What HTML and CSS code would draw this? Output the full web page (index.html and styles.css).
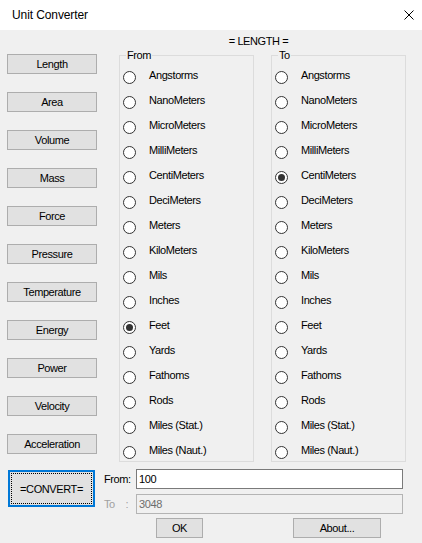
FILE: index.html
```html
<!DOCTYPE html>
<html>
<head>
<meta charset="utf-8">
<title>Unit Converter</title>
<link rel="stylesheet" href="styles.css">
</head>
<body>
<div class="window">
  <div class="titlebar">
    <span class="title">Unit Converter</span>
    <svg class="close" width="10" height="10" viewBox="0 0 10 10"><path d="M0.5 0.5L9.5 9.5M9.5 0.5L0.5 9.5" stroke="#000" stroke-width="1" fill="none"/></svg>
  </div>
  <div class="client">
    <div class="heading">= LENGTH =</div>
    <div class="top">
      <div class="units">
        <button class="btn unit">Length</button>
        <button class="btn unit">Area</button>
        <button class="btn unit">Volume</button>
        <button class="btn unit">Mass</button>
        <button class="btn unit">Force</button>
        <button class="btn unit">Pressure</button>
        <button class="btn unit">Temperature</button>
        <button class="btn unit">Energy</button>
        <button class="btn unit">Power</button>
        <button class="btn unit">Velocity</button>
        <button class="btn unit">Acceleration</button>
      </div>
      <div class="group from">
        <span class="legend">From</span>
        <div class="row"><span class="radio"></span><span>Angstorms</span></div>
        <div class="row"><span class="radio"></span><span>NanoMeters</span></div>
        <div class="row"><span class="radio"></span><span>MicroMeters</span></div>
        <div class="row"><span class="radio"></span><span>MilliMeters</span></div>
        <div class="row"><span class="radio"></span><span>CentiMeters</span></div>
        <div class="row"><span class="radio"></span><span>DeciMeters</span></div>
        <div class="row"><span class="radio"></span><span>Meters</span></div>
        <div class="row"><span class="radio"></span><span>KiloMeters</span></div>
        <div class="row"><span class="radio"></span><span>Mils</span></div>
        <div class="row"><span class="radio"></span><span>Inches</span></div>
        <div class="row"><span class="radio checked"></span><span>Feet</span></div>
        <div class="row"><span class="radio"></span><span>Yards</span></div>
        <div class="row"><span class="radio"></span><span>Fathoms</span></div>
        <div class="row"><span class="radio"></span><span>Rods</span></div>
        <div class="row"><span class="radio"></span><span>Miles (Stat.)</span></div>
        <div class="row"><span class="radio"></span><span>Miles (Naut.)</span></div>
      </div>
      <div class="group to">
        <span class="legend">To</span>
        <div class="row"><span class="radio"></span><span>Angstorms</span></div>
        <div class="row"><span class="radio"></span><span>NanoMeters</span></div>
        <div class="row"><span class="radio"></span><span>MicroMeters</span></div>
        <div class="row"><span class="radio"></span><span>MilliMeters</span></div>
        <div class="row"><span class="radio checked"></span><span>CentiMeters</span></div>
        <div class="row"><span class="radio"></span><span>DeciMeters</span></div>
        <div class="row"><span class="radio"></span><span>Meters</span></div>
        <div class="row"><span class="radio"></span><span>KiloMeters</span></div>
        <div class="row"><span class="radio"></span><span>Mils</span></div>
        <div class="row"><span class="radio"></span><span>Inches</span></div>
        <div class="row"><span class="radio"></span><span>Feet</span></div>
        <div class="row"><span class="radio"></span><span>Yards</span></div>
        <div class="row"><span class="radio"></span><span>Fathoms</span></div>
        <div class="row"><span class="radio"></span><span>Rods</span></div>
        <div class="row"><span class="radio"></span><span>Miles (Stat.)</span></div>
        <div class="row"><span class="radio"></span><span>Miles (Naut.)</span></div>
      </div>
    </div>
    <div class="bottom">
      <button class="btn convert">=CONVERT=</button>
      <div class="form">
        <div class="field">
          <span class="label">From:</span>
          <div class="input">100</div>
        </div>
        <div class="field">
          <span class="label disabled">To    :</span>
          <div class="input disabled">3048</div>
        </div>
        <div class="actions">
          <button class="btn ok">OK</button>
          <button class="btn about">About...</button>
        </div>
      </div>
    </div>
  </div>
</div>
</body>
</html>
```
FILE: styles.css
```css
* { box-sizing: border-box; }
html, body { margin: 0; padding: 0; }
body {
  background: #f0f0f0;
  font-family: "Liberation Sans", Arial, sans-serif;
  font-size: 11px;
  letter-spacing: -0.4px;
  color: #000;
}
.window { width: 422px; height: 543px; overflow: hidden; }
.titlebar {
  height: 30px;
  background: #fff;
  display: flex;
  align-items: center;
  justify-content: space-between;
  padding: 0 8px 0 12px;
}
.title { font-size: 12px; line-height: 30px; letter-spacing: -0.1px; }
.close { display: block; }
.client { padding: 5px 16px 0 7px; }
.heading {
  line-height: 13px;
  height: 13px;
  margin-left: 112px;
  width: 287px;
  padding-right: 8px;
  text-align: center;
}
.top { display: flex; margin-top: 6px; }
.units { display: flex; flex-direction: column; gap: 18px; width: 90px; }
.btn {
  font-family: inherit;
  font-size: 11px;
  letter-spacing: -0.4px;
  color: #000;
  background: #e1e1e1;
  border: 1px solid #adadad;
  padding: 0;
  margin: 0;
  height: 20px;
}
.unit { width: 90px; }
.group {
  position: relative;
  width: 135px;
  height: 407px;
  margin-top: 1px;
  border: 1px solid #dcdcdc;
  padding-top: 7px;
  display: grid;
  grid-auto-rows: 25px;
  align-content: start;
}
.from { margin-left: 22px; }
.to { margin-left: 17px; }
.legend {
  position: absolute;
  top: -7px;
  left: 6px;
  line-height: 13px;
  padding: 0 1px;
  background: #f0f0f0;
}
.row {
  display: flex;
  align-items: center;
  line-height: 25px;
  padding-left: 3px;
  gap: 13px;
}
.radio {
  position: relative;
  width: 13px;
  height: 13px;
  flex: none;
  border: 1px solid #333;
  border-radius: 50%;
  background: #fff;
  margin-top: 3px;
}
.radio.checked::after {
  content: "";
  position: absolute;
  left: 2px;
  top: 2px;
  width: 7px;
  height: 7px;
  border-radius: 50%;
  background: #333;
}
.bottom { display: flex; margin-top: 7px; }
.convert {
  width: 87px;
  height: 37px;
  margin: 1px 0 0 1px;
  border: 2px solid #0078d7;
  outline: 1px dotted #000;
  outline-offset: -4px;
}
.form { margin-left: 9px; display: flex; flex-direction: column; gap: 5px; }
.field { display: flex; align-items: center; }
.label { width: 32px; white-space: pre; }
.label.disabled { color: #a0a0a0; }
.input {
  width: 267px;
  height: 20px;
  border: 1px solid #7a7a7a;
  background: #fff;
  line-height: 18px;
  padding-left: 2px;
}
.input.disabled { background: #f0f0f0; border-color: #b4b4b4; color: #6d6d6d; }
.actions { display: flex; margin-top: -1px; padding-left: 52px; }
.ok { width: 47px; }
.about { width: 88px; margin-left: 90px; }
```
